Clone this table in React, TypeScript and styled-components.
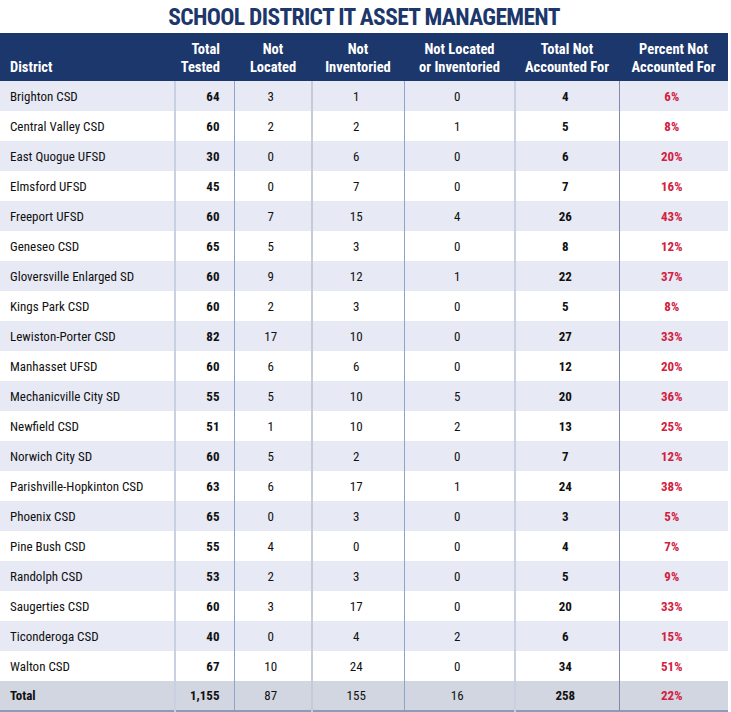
import React from "react";
import styled, { createGlobalStyle } from "styled-components";

const Global = createGlobalStyle`
  html, body { margin: 0; padding: 0; background: #ffffff; }
  body { font-family: "Roboto Condensed", "Liberation Sans", sans-serif; font-stretch: condensed; }
`;

const NAVY = "#1c376b";
const RED = "#d3203e";

const Page = styled.div`
  width: 731px;
  display: flex;
  flex-direction: column;
`;

const Title = styled.h1`
  margin: 0;
  height: 33px;
  display: flex;
  align-items: center;
  justify-content: center;
  padding-right: 3px;
  color: ${NAVY};
  font-weight: 700;
  font-size: 23.5px;
  letter-spacing: -0.65px;
`;

const Table = styled.table`
  width: 728px;
  border-collapse: collapse;
  table-layout: fixed;
`;

const HeadCell = styled.th<{ $align?: string }>`
  background: ${NAVY};
  color: #ffffff;
  font-weight: 700;
  font-size: 14.5px;
  line-height: 18px;
  height: 48px;
  box-sizing: border-box;
  padding: 0 4px 4px;
  vertical-align: bottom;
  text-align: ${(p) => p.$align || "center"};
  white-space: nowrap;
  &:first-child { padding-left: 10px; }
`;

const Row = styled.tr<{ $alt?: boolean; $total?: boolean }>`
  background: ${(p) => (p.$total ? "#d1d6e0" : p.$alt ? "#e7e9f5" : "#ffffff")};
  ${(p) => (p.$total ? "border-bottom: 2px solid #8d9bb8;" : "")}
  & > td:nth-child(2) { border-left: 2px solid #c9d0e2; }
  & > td:nth-child(3) { border-left: 1px solid #8fa4cc; }
  & > td:nth-child(4) { border-left: 2px solid #c6cbd6; }
  & > td:nth-child(5) { border-left: 1px solid #8fa4cc; }
  & > td:nth-child(6) { border-left: 2px solid #c9d0e2; }
  & > td:nth-child(7) { border-left: 1px solid #7f8ba8; }
`;

const Cell = styled.td<{ $align?: string; $bold?: boolean; $red?: boolean }>`
  height: 30px;
  box-sizing: border-box;
  padding: 0 14px 0 10px;
  font-size: 13px;
  color: ${(p) => (p.$red ? RED : "#111111")};
  font-weight: ${(p) => (p.$bold ? 700 : 400)};
  text-align: ${(p) => p.$align || "center"};
  vertical-align: middle;
  white-space: nowrap;
`;

type R = [string, string, number, number, number, number, string];

const rows: R[] = [
  ["Brighton CSD", "64", 3, 1, 0, 4, "6%"],
  ["Central Valley CSD", "60", 2, 2, 1, 5, "8%"],
  ["East Quogue UFSD", "30", 0, 6, 0, 6, "20%"],
  ["Elmsford UFSD", "45", 0, 7, 0, 7, "16%"],
  ["Freeport UFSD", "60", 7, 15, 4, 26, "43%"],
  ["Geneseo CSD", "65", 5, 3, 0, 8, "12%"],
  ["Gloversville Enlarged SD", "60", 9, 12, 1, 22, "37%"],
  ["Kings Park CSD", "60", 2, 3, 0, 5, "8%"],
  ["Lewiston-Porter CSD", "82", 17, 10, 0, 27, "33%"],
  ["Manhasset UFSD", "60", 6, 6, 0, 12, "20%"],
  ["Mechanicville City SD", "55", 5, 10, 5, 20, "36%"],
  ["Newfield CSD", "51", 1, 10, 2, 13, "25%"],
  ["Norwich City SD", "60", 5, 2, 0, 7, "12%"],
  ["Parishville-Hopkinton CSD", "63", 6, 17, 1, 24, "38%"],
  ["Phoenix CSD", "65", 0, 3, 0, 3, "5%"],
  ["Pine Bush CSD", "55", 4, 0, 0, 4, "7%"],
  ["Randolph CSD", "53", 2, 3, 0, 5, "9%"],
  ["Saugerties CSD", "60", 3, 17, 0, 20, "33%"],
  ["Ticonderoga CSD", "40", 0, 4, 2, 6, "15%"],
  ["Walton CSD", "67", 10, 24, 0, 34, "51%"],
];

const widths = [175, 59, 78, 92, 111, 104, 109];

export default function App() {
  return (
    <Page>
      <Global />
      <Title>SCHOOL DISTRICT IT ASSET MANAGEMENT</Title>
      <Table>
        <colgroup>
          {widths.map((w, i) => (
            <col key={i} style={{ width: w }} />
          ))}
        </colgroup>
        <thead>
          <tr>
            <HeadCell $align="left">District</HeadCell>
            <HeadCell $align="right" style={{ paddingRight: 14 }}>Total<br />Tested</HeadCell>
            <HeadCell>Not<br />Located</HeadCell>
            <HeadCell>Not<br />Inventoried</HeadCell>
            <HeadCell>Not Located<br />or Inventoried</HeadCell>
            <HeadCell>Total Not<br />Accounted For</HeadCell>
            <HeadCell>Percent Not<br />Accounted For</HeadCell>
          </tr>
        </thead>
        <tbody>
          {rows.map((r, i) => (
            <Row key={r[0]} $alt={i % 2 === 0}>
              <Cell $align="left">{r[0]}</Cell>
              <Cell $align="right" $bold>{r[1]}</Cell>
              <Cell>{r[2]}</Cell>
              <Cell>{r[3]}</Cell>
              <Cell>{r[4]}</Cell>
              <Cell $bold>{r[5]}</Cell>
              <Cell $bold $red>{r[6]}</Cell>
            </Row>
          ))}
          <Row $total>
            <Cell $align="left" $bold>Total</Cell>
            <Cell $align="right" $bold>1,155</Cell>
            <Cell>87</Cell>
            <Cell>155</Cell>
            <Cell>16</Cell>
            <Cell $bold>258</Cell>
            <Cell $bold $red>22%</Cell>
          </Row>
        </tbody>
      </Table>
    </Page>
  );
}
